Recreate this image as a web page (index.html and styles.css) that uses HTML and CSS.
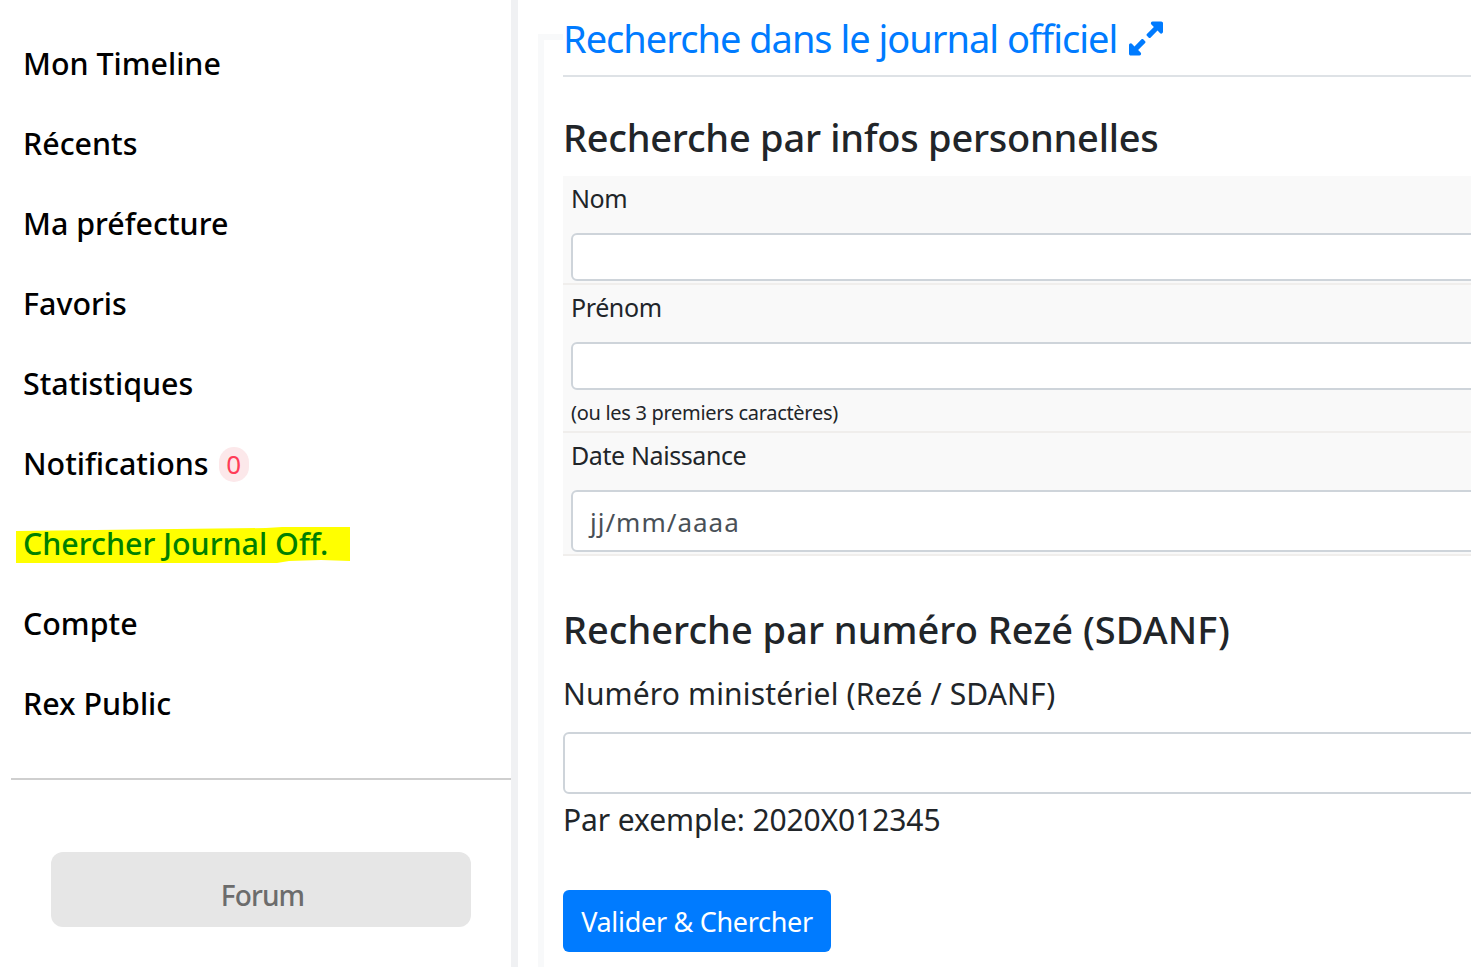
FILE: index.html
```html
<!DOCTYPE html>
<html lang="fr">
<head>
<meta charset="utf-8">
<title>Recherche dans le journal officiel</title>
<link rel="stylesheet" href="styles.css">
</head>
<body>
<div class="page">
  <aside class="sidebar">
    <nav class="nav">
      <a class="nav-item" href="#">Mon Timeline</a>
      <a class="nav-item" href="#">Récents</a>
      <a class="nav-item" href="#">Ma préfecture</a>
      <a class="nav-item" href="#">Favoris</a>
      <a class="nav-item" href="#">Statistiques</a>
      <a class="nav-item" href="#">Notifications <span class="badge">0</span></a>
      <a class="nav-item nav-item-marked" href="#"><span class="nav-text">Chercher Journal Off.</span></a>
      <a class="nav-item" href="#">Compte</a>
      <a class="nav-item" href="#">Rex Public</a>
    </nav>
    <hr class="side-rule">
    <a class="forum" href="#">Forum</a>
  </aside>
  <div class="frame"></div>
  <main class="content">
    <header class="title-block">
      <a class="title" href="#">Recherche dans le journal officiel</a>
      <svg class="expand" viewBox="0 32 448 448" aria-hidden="true"><path d="M212.686 315.314L120 408l32.922 31.029c15.12 15.12 4.412 40.971-16.97 40.971h-112C10.697 480 0 469.255 0 456V344c0-21.382 25.803-32.09 40.922-16.971L72 360l92.686-92.686c6.248-6.248 16.379-6.248 22.627 0l25.373 25.373c6.249 6.248 6.249 16.378 0 22.627zm22.628-118.628L328 104l-32.922-31.029C279.958 57.851 290.666 32 312.048 32h112C437.303 32 448 42.745 448 56v112c0 21.382-25.803 32.09-40.922 16.971L376 152l-92.686 92.686c-6.248 6.248-16.379 6.248-22.627 0l-25.373-25.373c-6.249-6.248-6.249-16.378 0-22.627z"/></svg>
    </header>
    <h2 class="section-title first">Recherche par infos personnelles</h2>
    <div class="rows">
      <div class="row row-nom">
        <label class="row-label">Nom</label>
        <div class="field"></div>
      </div>
      <div class="row row-prenom">
        <label class="row-label">Prénom</label>
        <div class="field"></div>
        <small class="hint">(ou les 3 premiers caractères)</small>
      </div>
      <div class="row row-date">
        <label class="row-label">Date Naissance</label>
        <div class="field field-date">jj/mm/aaaa</div>
      </div>
    </div>
    <h2 class="section-title second">Recherche par numéro Rezé (SDANF)</h2>
    <label class="big-label">Numéro ministériel (Rezé / SDANF)</label>
    <div class="field field-big"></div>
    <p class="example">Par exemple: 2020X012345</p>
    <button class="submit" type="button">Valider &amp; Chercher</button>
  </main>
</div>
</body>
</html>
```
FILE: styles.css
```css
* { box-sizing: border-box; }
html, body { margin: 0; height: 100%; overflow: hidden; background: #fff; }
body { font-family: "Noto Sans", "Open Sans", sans-serif; color: #212529; }
a { text-decoration: none; }

.page { display: flex; width: 1471px; height: 967px; overflow: hidden; }

.sidebar {
  flex: 0 0 518px;
  border-right: 7px solid #f0f1f3;
  padding: 23px 0 0 11px;
  display: flex;
  flex-direction: column;
}
.nav { display: flex; flex-direction: column; padding-left: 12px; }
.nav-item {
  height: 80px;
  display: flex;
  align-items: center;
  gap: 10px;
  font-size: 30.4px;
  font-weight: 500;
  color: #000;
  white-space: nowrap;
}
.nav-item-marked { position: relative; color: #008000; }
.nav-item-marked::before {
  content: "";
  position: absolute;
  left: -7px;
  top: 24px;
  width: 334px;
  height: 36px;
  background: #ffff00;
  clip-path: polygon(0 4px, 159px 2px, 250px 1px, 266px 0, 334px 0, 334px 34px, 305px 33px, 273px 34px, 261px 36px, 0 36px);
}
.nav-text { position: relative; }
.badge {
  width: 30px;
  height: 35px;
  margin-top: 2px;
  border-radius: 15px;
  background: #fce8ea;
  color: #ff3d57;
  font-size: 26px;
  font-weight: 400;
  display: flex;
  align-items: center;
  justify-content: center;
}
.side-rule { margin: 35px 0 0; border: 0; border-top: 2px solid #cfcfcf; width: 500px; }
.forum {
  margin: 72px 0 0 40px;
  width: 420px;
  height: 75px;
  border-radius: 12px;
  background: #e6e6e6;
  color: #6c6c6c;
  font-size: 28px;
  font-weight: 500;
  letter-spacing: -0.9px;
  display: flex;
  align-items: center;
  justify-content: center;
  padding: 10px 0 0 3px;
}

.frame {
  flex: 0 0 25px;
  margin: 34px 0 0 20px;
  border-top: 6px solid #f8f9fa;
  border-left: 6px solid #f8f9fa;
}

.content { flex: 0 0 930px; display: flex; flex-direction: column; align-items: flex-start; }

.title-block {
  align-self: stretch;
  height: 77px;
  border-bottom: 2px solid #dee2e6;
  padding: 12px 0 0;
  display: flex;
  align-items: flex-start;
  gap: 12px;
}
.title { font-size: 38px; line-height: 54px; letter-spacing: -1px; color: #007bff; margin-top: -1px; }
.expand { width: 34px; height: 35px; fill: #007bff; margin-top: 9px; }

.section-title { margin: 0; font-size: 38px; font-weight: 500; line-height: 54px; color: #212529; }
.section-title.first { margin-top: 33px; letter-spacing: -0.25px; }
.section-title.second { margin-top: 46px; letter-spacing: 0; }

.rows { align-self: stretch; margin-top: 12px; }
.row { background: #f9f9f9; padding: 0 8px; border-bottom: 2px solid #f0eeec; }
.row-label { display: block; font-size: 25px; line-height: 36px; letter-spacing: -0.4px; }
.row-nom { height: 109px; padding-top: 4px; }
.row-prenom { height: 148px; padding-top: 4px; }
.row-date { height: 123px; padding-top: 4px; }
.row .field { margin-top: 17px; height: 48px; }
.row .field-date { height: 62px; }
.field {
  width: 100%;
  background: #fff;
  border: 2px solid #ced4da;
  border-radius: 6px;
}
.field-date {
  display: flex;
  align-items: center;
  padding: 1px 0 0 17px;
  font-size: 26px;
  letter-spacing: 1px;
  color: #495057;
}
.hint { display: block; margin-top: 9px; font-size: 20px; line-height: 28px; letter-spacing: -0.3px; }

.big-label { margin-top: 16px; font-size: 30px; line-height: 44px; letter-spacing: 0.14px; }
.field-big { height: 62px; margin-top: 16px; }
.example { margin: 4px 0 0; font-size: 30px; line-height: 44px; letter-spacing: -0.1px; }
.submit {
  margin-top: 48px;
  width: 268px;
  height: 62px;
  border: 0;
  border-radius: 6px;
  background: #007bff;
  color: #fff;
  font-family: inherit;
  font-size: 27px;
  letter-spacing: -0.3px;
  padding: 0;
}
```
